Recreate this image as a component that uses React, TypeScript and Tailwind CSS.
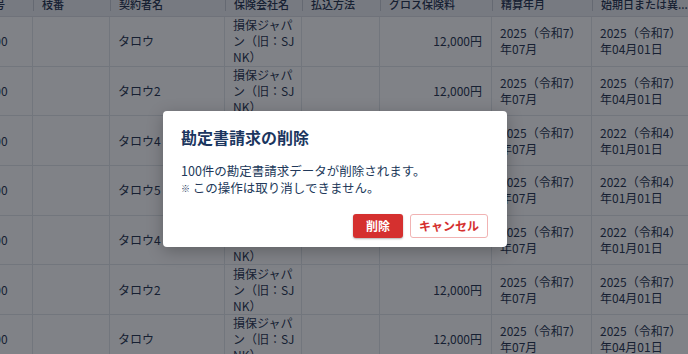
import React from "react";

type Row = {
  no: string;
  name: string;
  company: string;
  gross: string;
  settle: string;
  start: string;
};

const COMPANY = "損保ジャパン（旧：SJNK）";

const ROWS: Row[] = [
  { no: "1000000", name: "タロウ", company: COMPANY, gross: "12,000円", settle: "2025（令和7）年07月", start: "2025（令和7）年04月01日" },
  { no: "1000000", name: "タロウ2", company: COMPANY, gross: "12,000円", settle: "2025（令和7）年07月", start: "2025（令和7）年04月01日" },
  { no: "1000000", name: "タロウ4", company: COMPANY, gross: "12,000円", settle: "2025（令和7）年07月", start: "2022（令和4）年01月01日" },
  { no: "1000000", name: "タロウ5", company: COMPANY, gross: "12,000円", settle: "2025（令和7）年07月", start: "2022（令和4）年01月01日" },
  { no: "1000000", name: "タロウ4", company: COMPANY, gross: "12,000円", settle: "2025（令和7）年07月", start: "2022（令和4）年01月01日" },
  { no: "1000000", name: "タロウ2", company: COMPANY, gross: "12,000円", settle: "2025（令和7）年07月", start: "2025（令和7）年04月01日" },
  { no: "1000000", name: "タロウ", company: COMPANY, gross: "12,000円", settle: "2025（令和7）年07月", start: "2025（令和7）年04月01日" },
];

// column widths, first one is partly scrolled out to the left
const COLS = ["w-[80px]", "w-[77px]", "w-[115px]", "w-[77px]", "w-[78px]", "w-[112px]", "w-[100px]", "w-[100px]"];

const HEADERS = ["証券番号", "枝番", "契約者名", "保険会社名", "払込方法", "グロス保険料", "精算年月", "始期日または異..."];

function HeaderRow() {
  return (
    <div className="flex h-[26px] bg-[#eceef2] border-b border-[#dcdfe5]">
      {HEADERS.map((h, i) => (
        <div key={h} className={`${COLS[i]} shrink-0 flex items-center overflow-hidden`}>
          {i > 0 && <span className="w-px h-[14px] bg-[#c9cdd5] shrink-0" />}
          <span className="pl-2 whitespace-nowrap text-[11px] font-medium text-[#2d3a55]">{h}</span>
        </div>
      ))}
    </div>
  );
}

function Cell({ i, className = "", children }: { i: number; className?: string; children?: React.ReactNode }) {
  return (
    <div className={`${COLS[i]} shrink-0 flex items-center border-r border-[#e3e6eb] ${className}`}>
      {children}
    </div>
  );
}

function BodyRow({ row }: { row: Row }) {
  return (
    <div className="flex h-[49.7px] bg-white border-b border-[#e3e6eb]">
      <Cell i={0} className="px-2 whitespace-nowrap">{row.no}</Cell>
      <Cell i={1} />
      <Cell i={2} className="px-2">{row.name}</Cell>
      <Cell i={3} className="pl-2 pr-[4px] break-all">{row.company}</Cell>
      <Cell i={4} />
      <Cell i={5} className="justify-end pr-[9px]">{row.gross}</Cell>
      <Cell i={6} className="px-2">{row.settle}</Cell>
      <Cell i={7} className="px-2 border-r-0">{row.start}</Cell>
    </div>
  );
}

function DeleteDialog() {
  return (
    <div className="w-[344px] h-[136px] bg-white rounded-[4px] shadow-[0_4px_16px_rgba(0,0,0,0.25)] px-[18px] pt-[14px] pb-[9px] flex flex-col">
      <h2 className="text-[16px] leading-[24px] font-bold text-[#1b365f]">勘定書請求の削除</h2>
      <div className="mt-[13px] text-[12.5px] leading-[17px] text-[#22395a]">
        <p>100件の勘定書請求データが削除されます。</p>
        <p>
          <span className="text-[9px] align-[1px]">※</span> この操作は取り消しできません。
        </p>
      </div>
      <div className="mt-auto flex justify-end gap-[7px] pr-px">
        <button className="w-[50px] h-[24px] rounded-[3px] bg-[#d5302f] text-white text-[12px] font-bold shadow-[0_1px_2px_rgba(0,0,0,0.3)]">
          削除
        </button>
        <button className="w-[78px] h-[24px] rounded-[3px] bg-white border border-[#f1b3b3] text-[#d5302f] text-[12px] font-bold">
          キャンセル
        </button>
      </div>
    </div>
  );
}

export default function App() {
  return (
    <div
      className="relative w-[688px] h-[354px] overflow-hidden bg-white text-[12px] leading-[16px] text-[#2d3a55]"
      style={{ fontFamily: '"Noto Sans CJK JP", "Noto Sans", sans-serif' }}
    >
      <div className="ml-[-47px] mt-[-9px] w-max">
        <HeaderRow />
        {ROWS.map((r, i) => (
          <BodyRow key={i} row={r} />
        ))}
      </div>

      {/* modal overlay */}
      <div className="absolute inset-0 bg-[rgba(2,6,16,0.5)]">
        <div className="absolute left-[163px] top-[111px]">
          <DeleteDialog />
        </div>
      </div>
    </div>
  );
}
